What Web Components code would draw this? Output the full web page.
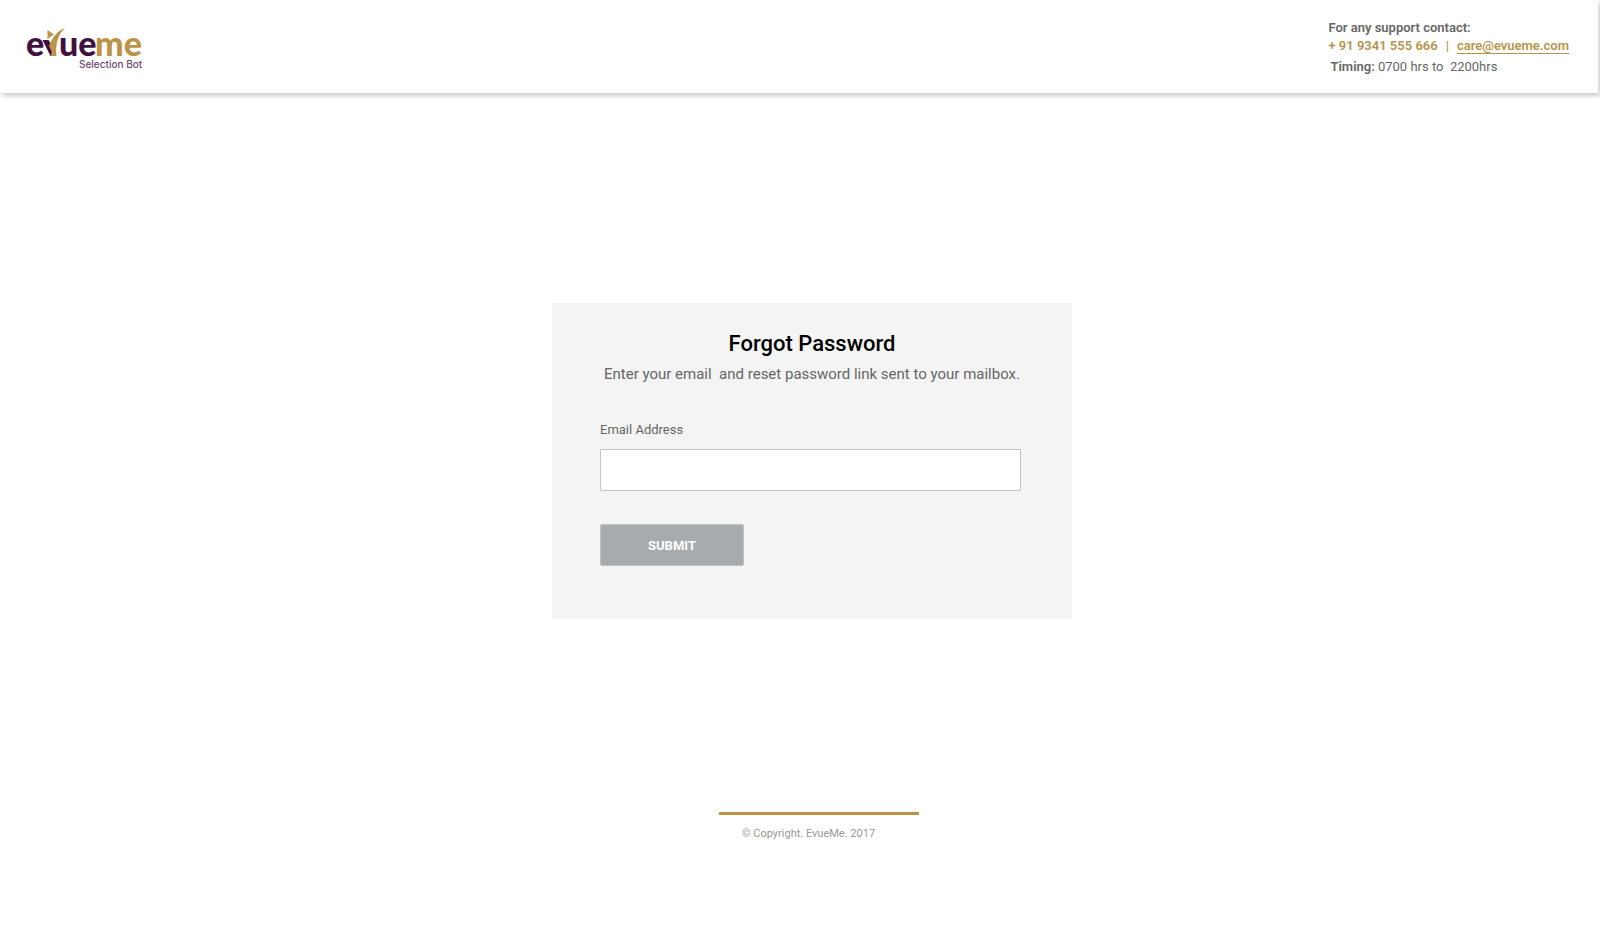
<!DOCTYPE html>
<html lang="en">
<head>
<meta charset="utf-8">
<title>EvueMe – Forgot Password</title>
<style>
html, body { height: 100%; margin: 0; }
body { background: #fff; color: #666; font-family: Roboto, "Liberation Sans", sans-serif; font-size: 13px; }
</style>
</head>
<body>
<evm-page>
  <evm-header slot="header"></evm-header>
  <evm-forgot-card>
    <span slot="title">Forgot Password</span>
    <span slot="hint">Enter your email&nbsp; and reset password link sent to your mailbox.</span>
  </evm-forgot-card>
  <evm-footer slot="footer">© Copyright. EvueMe. 2017</evm-footer>
</evm-page>
<script>
function define(name, html) {
  const template = document.createElement('template');
  template.innerHTML = html;
  customElements.define(name, class extends HTMLElement {
    constructor() {
      super();
      this.attachShadow({ mode: 'open' }).append(template.content.cloneNode(true));
    }
  });
}

define('evm-logo', `
<style>
:host { display: block; }
svg { display: block; width: 128px; height: 48px; }
.mark { font: 900 34px Lato, sans-serif; }
.tag { font: 500 10px Inter, sans-serif; fill: #6d4a72; }
</style>
<svg viewBox="0 0 128 48" role="img" aria-label="evueme Selection Bot">
  <text class="mark" x="1" y="33" fill="#42103f">e</text>
  <path fill="#42103f" d="M17.500 17H23.500L28 24L27 33H25.500Z"/>
  <path fill="#bc9448" d="M22.500 7L29 11.500L22.500 16Z"/>
  <path fill="#bc9448" d="M40 5C33 7 27.500 14 24 23L26.500 28L26 33H31.500C30 22 33 11 40 5Z"/>
  <text class="mark" x="34" y="33" fill="#42103f">ue</text>
  <text class="mark" x="70" y="33" fill="#bc9448">me</text>
  <text class="tag" x="54" y="45">Selection Bot</text>
</svg>`);

define('evm-support', `
<style>
:host { display: block; line-height: 18px; font-size: 13px; padding-top: 2px; }
p { margin: 0; white-space: nowrap; }
b { font-weight: 600; }
.contact { color: #b8944a; font-weight: 600; display: flex; gap: 8px; }
.time { margin-top: 3px; padding-left: 2px; }
a { color: inherit; text-decoration: underline; text-decoration-color: #b8944a; text-underline-offset: 3px; }
</style>
<p><b>For any support contact:</b></p>
<p class="contact"><span>+ 91 9341 555 666</span><span>|</span><a href="mailto:care@evueme.com">care@evueme.com</a></p>
<p class="time"><b>Timing:</b> 0700 hrs to&nbsp; 2200hrs</p>`);

define('evm-header', `
<style>
:host { display: block; }
header { display: flex; justify-content: space-between; align-items: center; box-sizing: border-box;
  min-height: 93px; margin-right: 2px; padding: 0 29px 0 25px; background: #fff;
  box-shadow: 2px 3px 4px rgba(0,0,0,.2); }
</style>
<header><evm-logo></evm-logo><evm-support></evm-support></header>`);

define('evm-forgot-card', `
<style>
:host { display: block; width: 100%; max-width: 520px; }
form { display: flex; flex-direction: column; box-sizing: border-box; padding: 25px 51px 53px 48px; background: #f4f4f4; }
h1 { margin: 0 -3px 0 0; color: #000; font-size: 22px; line-height: 32px; font-weight: 500; text-align: center; }
p { margin: 2px -23px 0 -20px; font-size: 15px; line-height: 24px; text-align: center; }
label { margin-top: 34px; line-height: 20px; font-size: 13px; }
input { box-sizing: border-box; width: 100%; height: 42px; margin-top: 9px; padding: 0 12px; border: 1px solid #c4c4c4; border-radius: 1px; background: #fff; font: inherit; outline: 0; }
button { width: 144px; height: 42px; margin-top: 33px; padding: 2px 0 0; border: 1px solid #bfc2c3; border-radius: 2px; background: #a7abae; color: #fff; font: 700 13px Roboto, sans-serif; }
</style>
<form>
  <h1><slot name="title"></slot></h1>
  <p><slot name="hint"></slot></p>
  <label for="email">Email Address</label>
  <input id="email" type="email">
  <button type="button">SUBMIT</button>
</form>`);

define('evm-footer', `
<style>
:host { display: block; }
footer { width: 200px; border-top: 3px solid #b8944a; box-sizing: border-box; padding: 10px 21px 0 0;
  color: #999; font-size: 11px; line-height: 18px; text-align: center; }
</style>
<footer><slot></slot></footer>`);

define('evm-page', `
<style>
:host { display: flex; flex-direction: column; min-height: 100%; }
main { flex: 1; display: flex; align-items: center; justify-content: center; padding: 16px 0 0 24px; }
.foot { display: flex; justify-content: center; padding: 0 0 93px 38px; }
</style>
<slot name="header"></slot>
<main><slot></slot></main>
<div class="foot"><slot name="footer"></slot></div>`);
</script>
</body>
</html>
